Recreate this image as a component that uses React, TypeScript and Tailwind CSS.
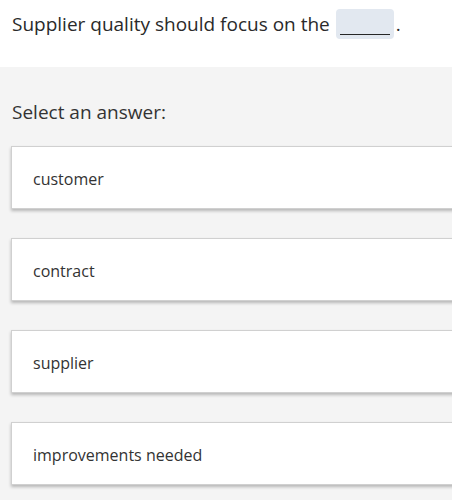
import React from "react";

const options = ["customer", "contract", "supplier", "improvements needed"];

export default function App() {
  return (
    <div
      className="w-[452px] h-[500px] overflow-hidden bg-[#f4f4f4] text-[#262626]"
      style={{ fontFamily: '"Open Sans", "Noto Sans", sans-serif' }}
    >
      <div className="bg-white h-[67px] pl-[12px] pt-[8px] flex items-start">
        <p className="text-[19px] leading-[32px] flex items-center text-[#2a2a2a]">
          <span>Supplier quality should focus on the</span>
          <span className="ml-[6px] w-[58px] h-[30px] rounded-[4px] bg-[#e2e8f0] flex items-end justify-center pb-[4px]">
            <span className="block w-[50px] h-[1.5px] bg-[#262626]" />
          </span>
          <span className="ml-[2px]">.</span>
        </p>
      </div>
      <div className="pl-[12px] pt-[32px]">
        <p className="text-[19px] leading-[26px] text-[#333]">Select an answer:</p>
      </div>
      <div className="pl-[11px] pt-[21px] flex flex-col gap-[29px]">
        {options.map((o) => (
          <div
            key={o}
            className="w-[470px] h-[63px] bg-white border border-[#d0d0d0] shadow-[0_2px_3px_rgba(0,0,0,0.25)] flex items-center pl-[21px] pt-[3px] text-[16px] text-[#333]"
          >
            {o}
          </div>
        ))}
      </div>
    </div>
  );
}
